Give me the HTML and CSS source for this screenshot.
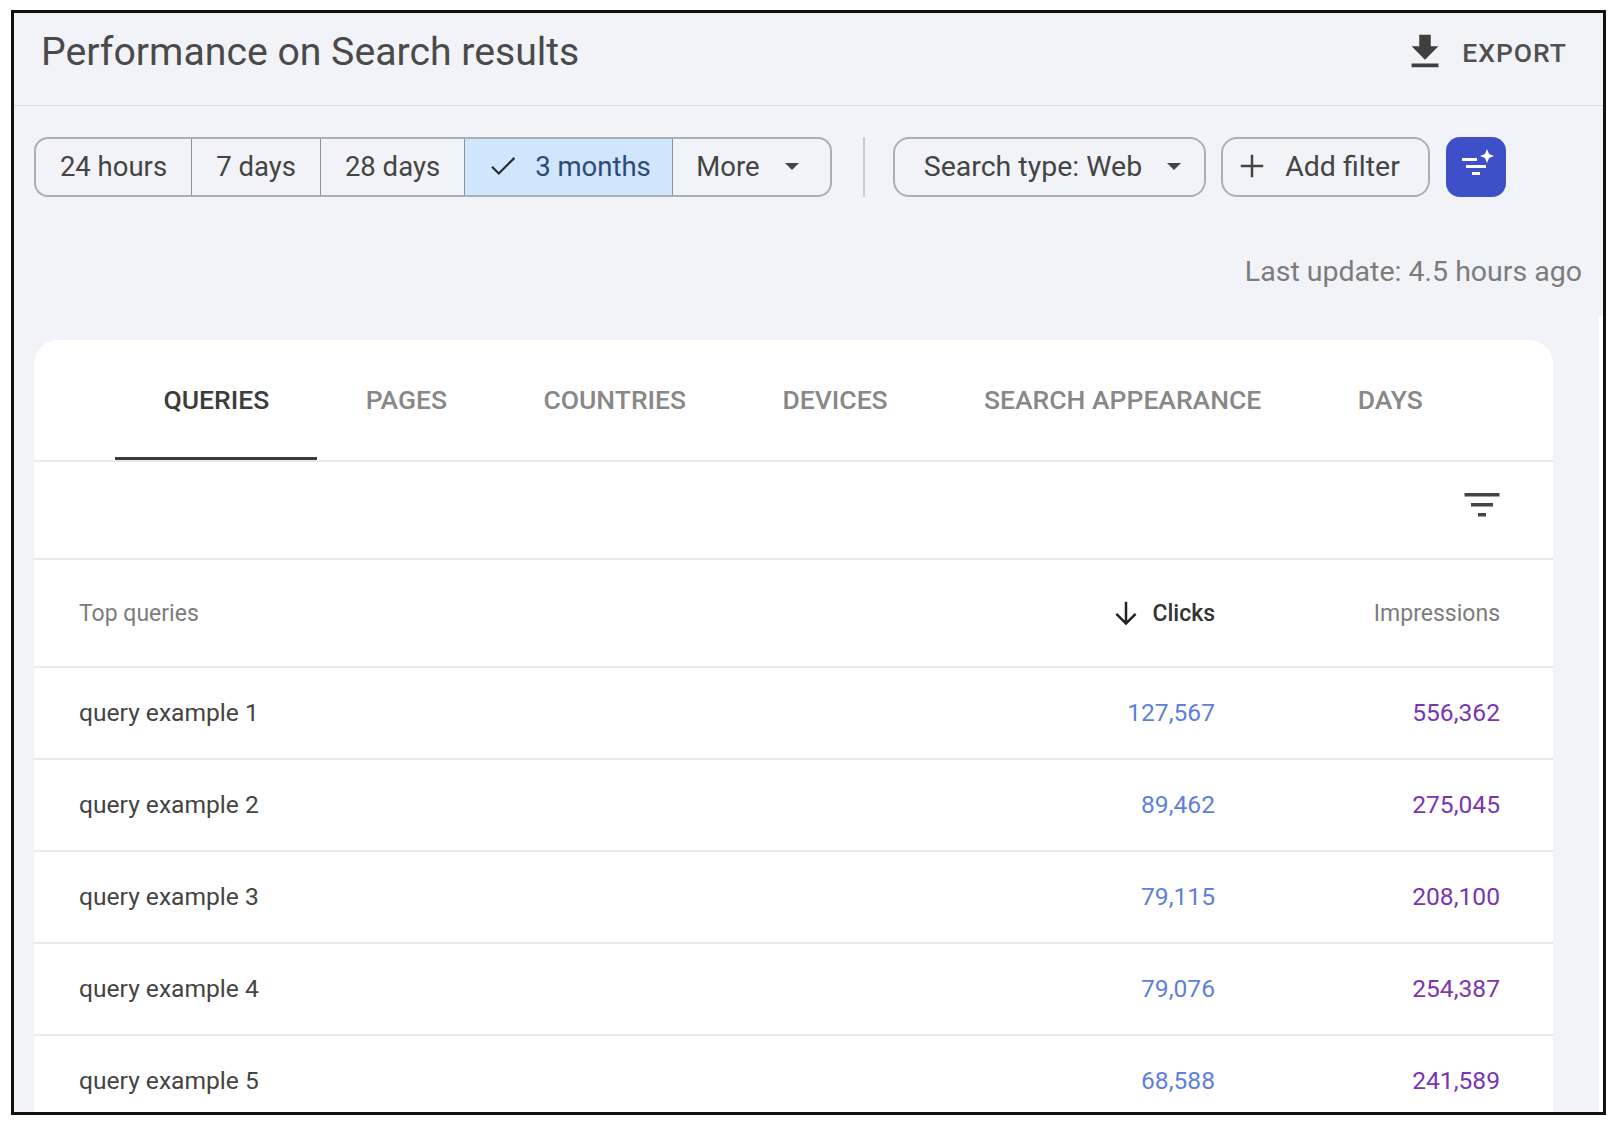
FILE: index.html
```html
<!DOCTYPE html>
<html lang="en">
<head>
<meta charset="UTF-8" />
<title>Performance on Search results</title>
<link rel="stylesheet" href="styles.css">
</head>
<body>

<div class="frame">
  <header class="topbar">
    <h1>Performance on Search results</h1>
    <div class="export">
      <svg class="export-icon" viewBox="0 0 24 24"><path d="M19 9h-4V3H9v6H5l7 7 7-7zM5 18v2h14v-2H5z"/></svg>
      <span>EXPORT</span>
    </div>
  </header>

  <div class="filters">
    <div class="ranges">
      <div class="range r-24">24 hours</div>
      <div class="range r-7">7 days</div>
      <div class="range r-28">28 days</div>
      <div class="range r-3 selected">
        <svg class="check" viewBox="0 0 24 24"><path d="M9 16.2 4.8 12l-1.1 1.1L9 18.4 20.6 6.8l-1.1-1.1z"/></svg>
        3 months
      </div>
      <div class="range r-more">More <span class="caret"></span></div>
    </div>
    <div class="vsep"></div>
    <div class="chip chip-type">Search type: Web <span class="caret"></span></div>
    <div class="chip chip-add">
      <svg class="plus" viewBox="0 0 24 24"><path d="M11 3h2v8h8v2h-8v8h-2v-8H3v-2h8z"/></svg>
      Add filter
    </div>
    <div class="ai-btn">
      <svg viewBox="0 0 60 60"><path d="M16 21h15v3H16zM20 28h20v3H20zM26 35h8v3h-8zM41 12l2 5 5 2-5 2-2 5-2-5-5-2 5-2z"/></svg>
    </div>
  </div>

  <div class="updated">Last update: 4.5 hours ago</div>

  <section class="card">
    <nav class="tabs">
      <div class="tab active">QUERIES</div>
      <div class="tab">PAGES</div>
      <div class="tab">COUNTRIES</div>
      <div class="tab">DEVICES</div>
      <div class="tab">SEARCH APPEARANCE</div>
      <div class="tab">DAYS</div>
    </nav>

    <div class="tools">
      <svg class="filter-icon" viewBox="0 0 36 36"><path d="M.5 5h35v3.500H.5zM7 15h22v3.500H7zM14 25h8v3.500h-8z"/></svg>
    </div>

    <div class="row head">
      <div class="name">Top queries</div>
      <div class="clicks sorted">
        <svg class="arrow" viewBox="0 0 24 24"><path d="M11 3h2v15l6-6 1.400 1.400L12 21.800 3.600 13.400 5 12l6 6z"/></svg>
        Clicks
      </div>
      <div class="impr">Impressions</div>
    </div>

    <div class="row">
      <div class="name">query example 1</div>
      <div class="clicks">127,567</div>
      <div class="impr">556,362</div>
    </div>
    <div class="row">
      <div class="name">query example 2</div>
      <div class="clicks">89,462</div>
      <div class="impr">275,045</div>
    </div>
    <div class="row">
      <div class="name">query example 3</div>
      <div class="clicks">79,115</div>
      <div class="impr">208,100</div>
    </div>
    <div class="row">
      <div class="name">query example 4</div>
      <div class="clicks">79,076</div>
      <div class="impr">254,387</div>
    </div>
    <div class="row">
      <div class="name">query example 5</div>
      <div class="clicks">68,588</div>
      <div class="impr">241,589</div>
    </div>
  </section>

  <div class="track"></div>
</div>

</body>
</html>
```

FILE: styles.css
```css
html, body {
  height: 100%;
  overflow: hidden;
}
body {
  margin: 0;
  padding: 10px 10px 9px 11px;
  background: #fff;
  font-family: Roboto, Arial, sans-serif;
  color: #444;
}
.frame {
  position: relative;
  width: 1595px;
  height: 1105px;
  box-sizing: border-box;
  border: 3px solid #111;
  background: #f1f3f9;
  overflow: hidden;
}

/* top bar */
.topbar {
  display: flex;
  align-items: center;
  justify-content: space-between;
  height: 93px;
  box-sizing: border-box;
  padding: 0 36px 15px 27px;
  border-bottom: 1px solid #d8dade;
}
h1 {
  margin: 0;
  font-size: 39.200px;
  font-weight: 400;
  color: #4a4a4a;
}
.export {
  display: flex;
  align-items: center;
  gap: 14px;
  font-size: 26.500px;
  font-weight: 500;
  letter-spacing: 1px;
  color: #505050;
}
.export span {
  padding-top: 2px;
}
.export-icon {
  width: 46px;
  height: 46px;
  fill: #3f3f3f;
}

/* filter row */
.filters {
  display: flex;
  align-items: center;
  height: 60px;
  margin-top: 31px;
  padding-left: 20px;
  font-size: 27.500px;
}
.ranges {
  display: flex;
  width: 798px;
  height: 60px;
  box-sizing: border-box;
  border: 2px solid #adafb3;
  border-radius: 14px;
  overflow: hidden;
}
.range {
  display: flex;
  align-items: center;
  justify-content: center;
  box-sizing: border-box;
  padding-bottom: 2px;
  border-right: 1px solid #8f9195;
}
.r-24 { width: 156px; }
.r-7 { width: 129px; }
.r-28 { width: 144px; }
.r-3 { width: 208px; }
.r-more {
  flex: 1;
  gap: 25px;
  padding-right: 8px;
  border-right: 0;
}
.selected {
  gap: 15px;
  background: #d0e6fc;
  color: #2f4a78;
}
.check {
  width: 34px;
  height: 34px;
  fill: #2b2b2b;
}
.caret {
  display: inline-block;
  width: 0;
  height: 0;
  border-left: 7px solid transparent;
  border-right: 7px solid transparent;
  border-top: 7px solid #444;
}
.vsep {
  width: 2px;
  height: 60px;
  margin: 0 28px 0 31px;
  background: #c9cbd0;
}
.chip {
  display: flex;
  align-items: center;
  justify-content: center;
  height: 60px;
  box-sizing: border-box;
  padding-bottom: 2px;
  border: 2px solid #adafb3;
  border-radius: 16px;
  font-size: 28.500px;
}
.chip-type {
  width: 313px;
  gap: 25px;
  padding-left: 6px;
}
.chip-add {
  width: 209px;
  gap: 18px;
  margin-left: 15px;
  padding-right: 14px;
}
.plus {
  width: 30px;
  height: 30px;
  fill: #444;
}
.ai-btn {
  width: 60px;
  height: 60px;
  margin-left: 16px;
  border-radius: 14px;
  background: #3d50c8;
}
.ai-btn svg {
  display: block;
  width: 60px;
  height: 60px;
  fill: #fff;
}

.updated {
  margin-top: 57px;
  padding-right: 21px;
  text-align: right;
  font-size: 28.500px;
  line-height: 36px;
  color: #7c7c7c;
}

/* table card */
.card {
  width: 1519px;
  margin: 50px 0 0 20px;
  background: #fff;
  border-radius: 24px 24px 0 0;
}
.tabs {
  display: flex;
  height: 122px;
  padding-left: 81.300px;
  border-bottom: 2px solid #e8e9eb;
  box-sizing: border-box;
}
.tab {
  display: flex;
  align-items: center;
  justify-content: center;
  height: 120px;
  box-sizing: border-box;
  padding: 0 48.200px 2px;
  font-size: 26.500px;
  font-weight: 500;
  color: #888;
}
.tab.active {
  color: #3c3c3c;
  box-shadow: inset 0 -3px #3c3c3c;
}
.tools {
  display: flex;
  align-items: center;
  justify-content: flex-end;
  height: 98px;
  box-sizing: border-box;
  padding: 0 53px 8px 0;
  border-bottom: 2px solid #e8e9eb;
}
.filter-icon {
  width: 36px;
  height: 36px;
  fill: #444;
}
.row {
  display: flex;
  align-items: center;
  height: 92px;
  box-sizing: border-box;
  padding: 0 53px 2px 45px;
  border-bottom: 2px solid #e8e9eb;
  font-size: 24.600px;
}
.row.head {
  height: 108px;
  padding-bottom: 0;
  font-size: 23px;
  color: #7c7c7c;
}
.name {
  flex: 1;
}
.clicks {
  display: flex;
  align-items: center;
  justify-content: flex-end;
  gap: 11px;
  color: #5f7fdb;
}
.impr {
  width: 285px;
  text-align: right;
  color: #7b35b0;
}
.head .impr {
  color: #7c7c7c;
}
.head .sorted {
  font-weight: 500;
  color: #333;
}
.arrow {
  width: 30px;
  height: 30px;
  fill: #222;
}

/* sliver of scrollbar track on the right */
.track {
  position: absolute;
  top: 303px;
  right: 0;
  bottom: 0;
  width: 4px;
  background: #fff;
}
```
